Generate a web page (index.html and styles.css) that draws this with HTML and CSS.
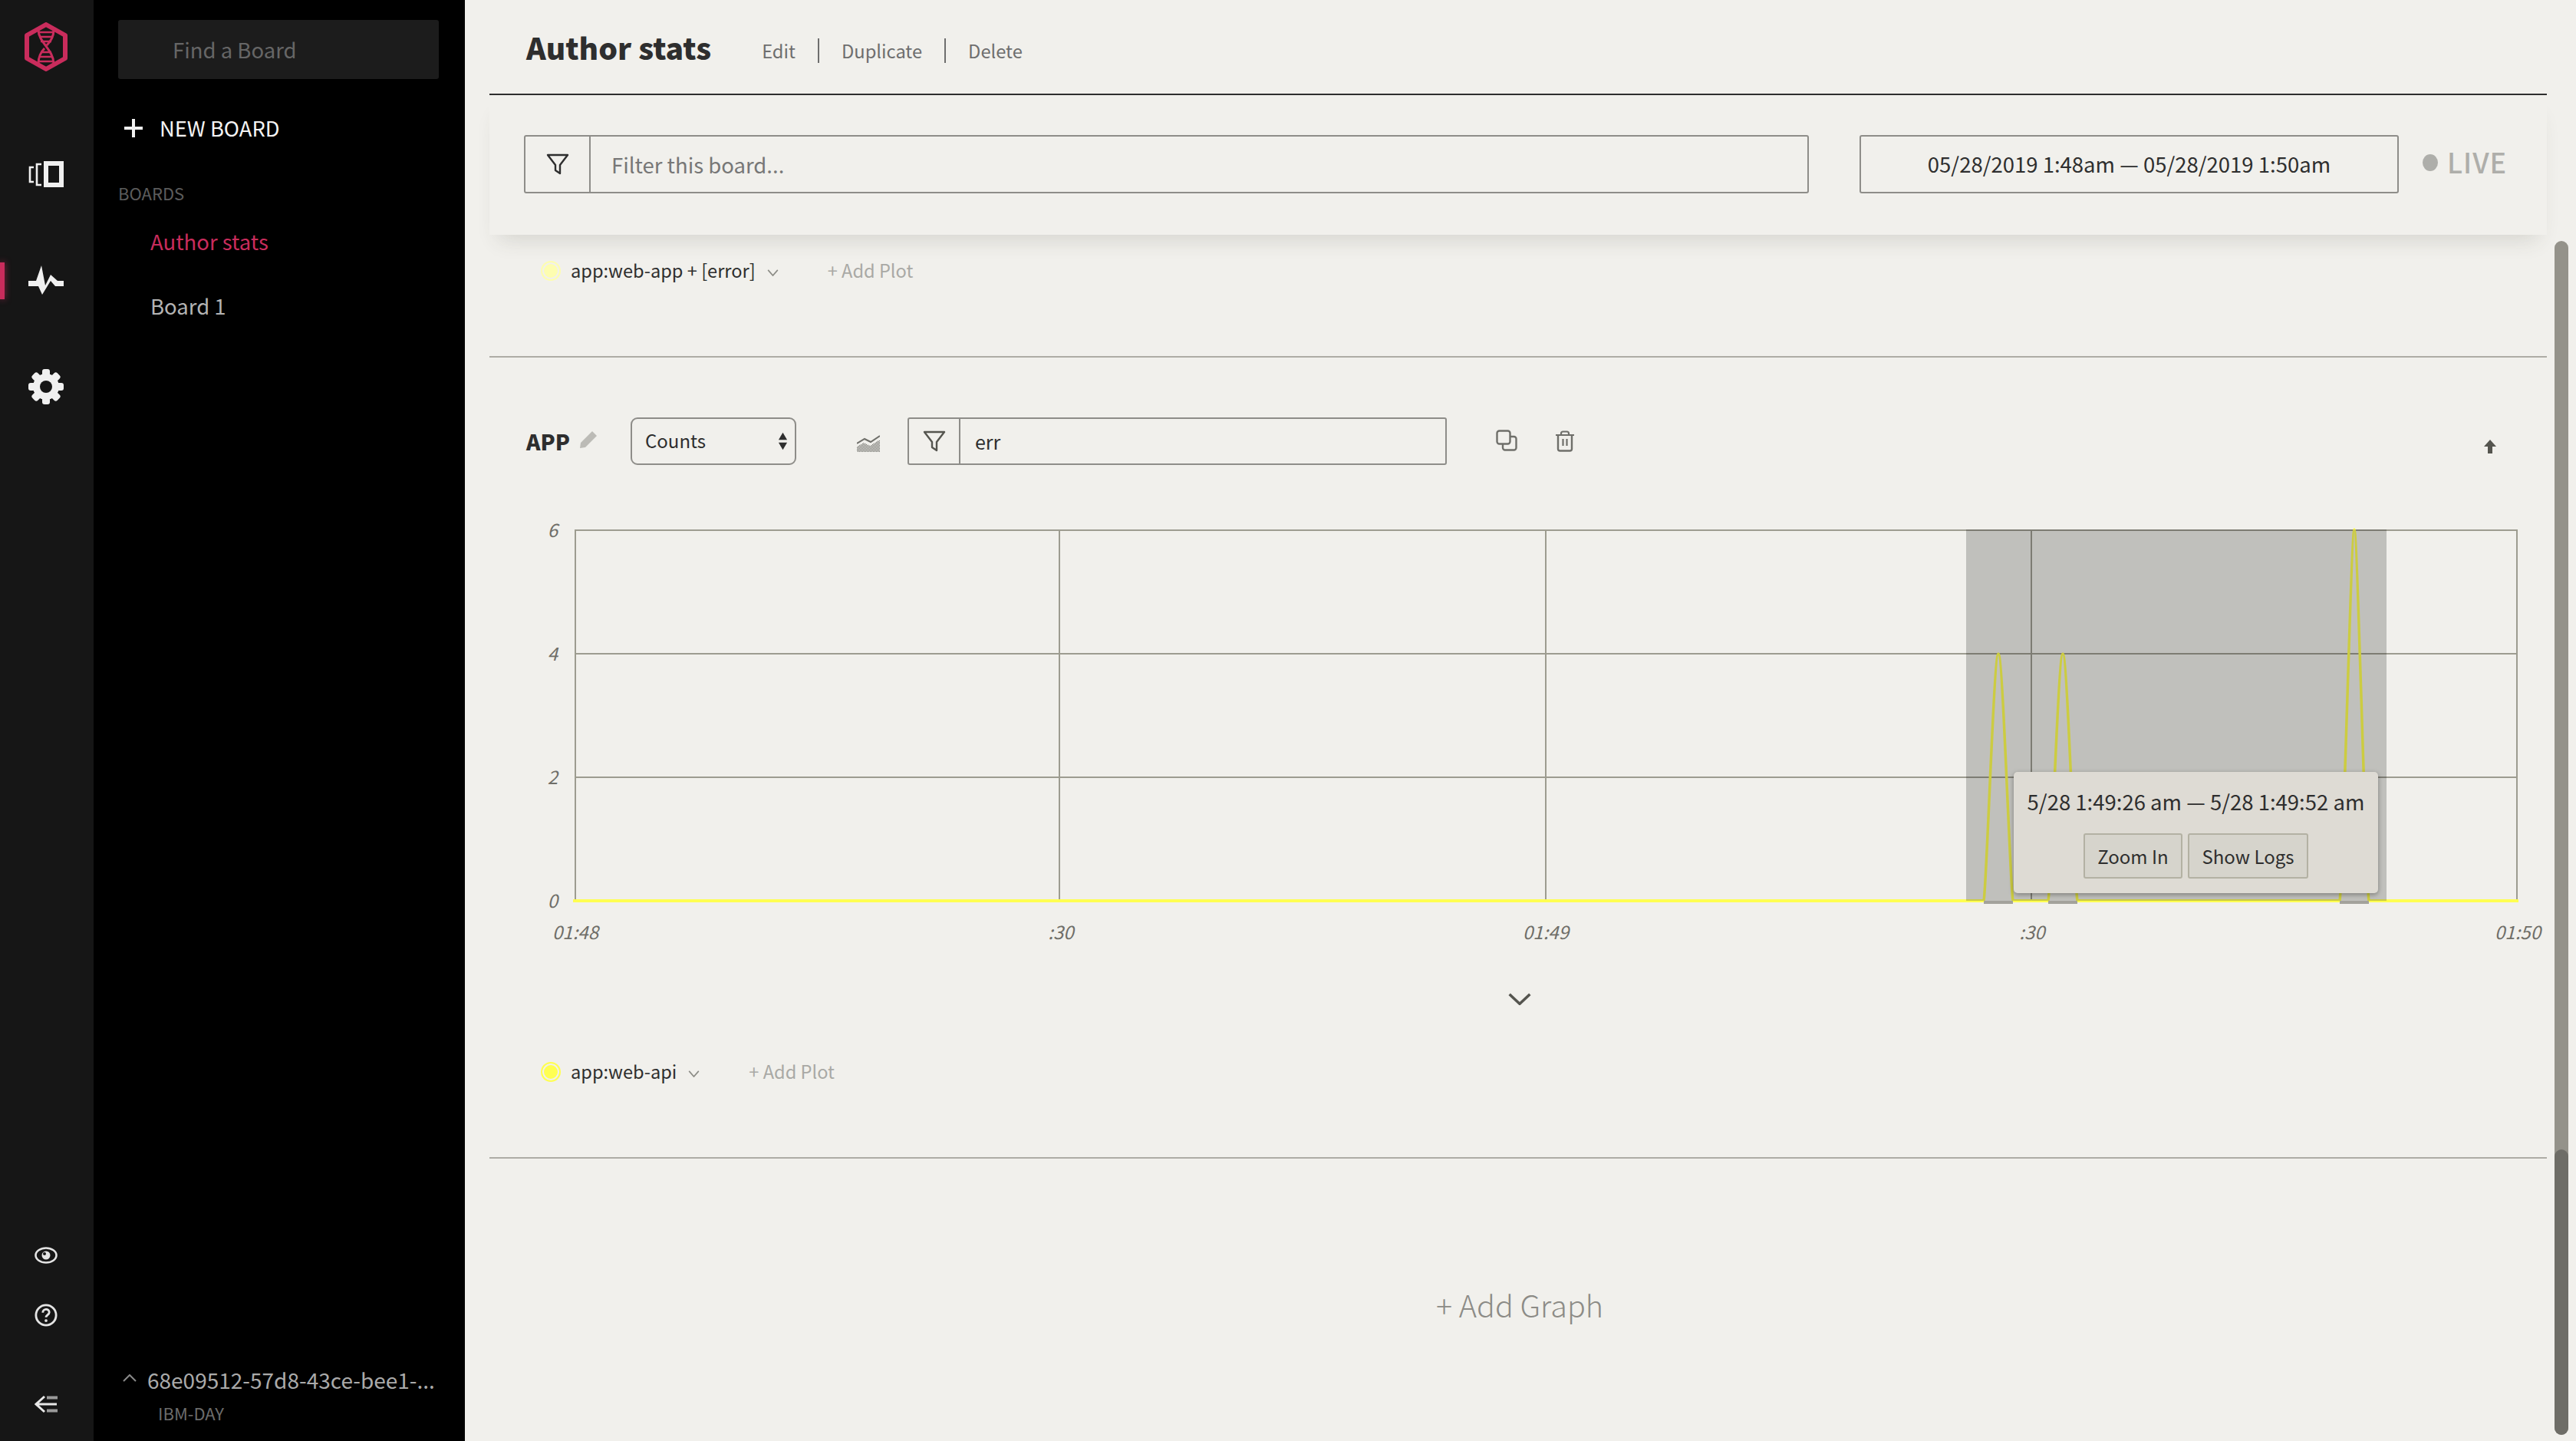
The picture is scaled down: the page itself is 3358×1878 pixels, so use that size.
FILE: index.html
```html
<!DOCTYPE html>
<html lang="en">
<head>
    <meta charset="UTF-8">
    <meta name="viewport" content="width=device-width, initial-scale=1.0">
    <title>Author stats</title>
    <link rel="stylesheet" href="styles.css">
</head>
<body>
<div class="app">
    <!-- Icon rail -->
    <nav class="rail">
        <svg class="rail-logo" viewBox="0 0 56 64">
            <path d="M28 3 L53 17 V47 L28 61 L3 47 V17 Z" fill="none" stroke="#c92c5c" stroke-width="6" stroke-linejoin="round"/>
            <path d="M18 10 C18 26 38 36 38 54 M38 10 C38 20 33 26 29 30 M26 34 C21 39 18 45 18 54" fill="none" stroke="#c92c5c" stroke-width="3"/>
            <path d="M18 13 H38 M19 19 H37 M21 25 H35 M21 39 H35 M19 45 H37 M18 51 H38" stroke="#c92c5c" stroke-width="2.5"/>
        </svg>
        <svg class="rail-icon icon-boards" viewBox="0 0 46 34">
            <rect x="23" y="3" width="20" height="28" fill="none" stroke="#f0f0f0" stroke-width="6"/>
            <path d="M7 8 H2 V27 H7 M17 4 H11 V31 H17" fill="none" stroke="#f0f0f0" stroke-width="2.6"/>
        </svg>
        <div class="rail-active">
            <span class="active-bar"></span>
            <svg class="rail-icon icon-pulse" viewBox="0 0 46 38">
                <polygon points="0,20 10,20 17,0 22,26 29,12 38,20 46,20 46,27 35,27 29,20 18,38 13,27 0,27" fill="#f0f0f0"/>
            </svg>
        </div>
        <svg class="rail-icon icon-gear" viewBox="0 0 46 46">
            <g fill="#f0f0f0">
                <rect x="18" y="0" width="10" height="46" rx="3"/>
                <rect x="18" y="0" width="10" height="46" rx="3" transform="rotate(45 23 23)"/>
                <rect x="18" y="0" width="10" height="46" rx="3" transform="rotate(90 23 23)"/>
                <rect x="18" y="0" width="10" height="46" rx="3" transform="rotate(135 23 23)"/>
                <circle cx="23" cy="23" r="17"/>
            </g>
            <circle cx="23" cy="23" r="8" fill="#161616"/>
        </svg>
        <div class="rail-bottom">
            <svg class="rail-small icon-eye" viewBox="0 0 30 22">
                <ellipse cx="15" cy="11" rx="13.5" ry="9.5" fill="none" stroke="#e4e4e4" stroke-width="2.6"/>
                <circle cx="15" cy="11" r="5.5" fill="#e4e4e4"/>
                <circle cx="13" cy="9" r="2" fill="#161616"/>
            </svg>
            <svg class="rail-small icon-help" viewBox="0 0 32 32">
                <circle cx="16" cy="16" r="14" fill="none" stroke="#e4e4e4" stroke-width="3"/>
                <path d="M11.5 12.5 C11.5 6.5 20.5 6.5 20.5 12 C20.5 15.5 16 15.5 16 19" fill="none" stroke="#e4e4e4" stroke-width="3"/>
                <circle cx="16" cy="23.5" r="2" fill="#e4e4e4"/>
            </svg>
            <svg class="rail-small icon-collapse" viewBox="0 0 30 24">
                <path d="M13 2 L2 12 L13 22 M2 12 H29" fill="none" stroke="#e8e8e8" stroke-width="3"/>
                <path d="M16 3.5 H30 M16 20.5 H30" stroke="#9a9a9a" stroke-width="4"/>
            </svg>
        </div>
    </nav>

    <!-- Boards list -->
    <aside class="sidebar">
        <div class="board-search">Find a Board</div>
        <div class="new-board">
            <svg class="new-board-icon" viewBox="0 0 24 24"><path d="M12 0 V24 M0 12 H24" stroke="#f0f0f0" stroke-width="4"/></svg>
            <span>NEW BOARD</span>
        </div>
        <div class="boards-label">BOARDS</div>
        <a class="board-link board-link-active">Author stats</a>
        <a class="board-link">Board 1</a>
        <div class="account">
            <div class="account-row">
                <svg class="account-caret" viewBox="0 0 18 10"><path d="M1 9 L9 1 L17 9" fill="none" stroke="#8a8a8a" stroke-width="2"/></svg>
                <span class="account-id">68e09512-57d8-43ce-bee1-...</span>
            </div>
            <div class="account-name">IBM-DAY</div>
        </div>
    </aside>

    <main class="main">
        <header class="board-head">
            <h1 class="board-title">Author stats</h1>
            <a class="head-action">Edit</a>
            <a class="head-action">Duplicate</a>
            <a class="head-action">Delete</a>
        </header>

        <section class="filter-bar">
            <div class="filter-box filter-box-main">
                <span class="filter-cell">
                    <svg class="funnel" viewBox="0 0 30 28"><path d="M2 2 H28 L18 15 V26 L12 22 V15 Z" fill="none" stroke="#2e2e2e" stroke-width="2.4" stroke-linejoin="round"/></svg>
                </span>
                <span class="filter-text">Filter this board...</span>
            </div>
            <div class="date-box">05/28/2019 1:48am — 05/28/2019 1:50am</div>
            <div class="live"><span class="live-dot"></span>LIVE</div>
        </section>

        <section class="graph graph-prev">
            <div class="legend">
                <span class="legend-dot legend-dot-pale"></span>
                <span class="legend-name">app:web-app + [error]</span>
                <svg class="legend-caret" viewBox="0 0 16 10"><path d="M1 1 L8 9 L15 1" fill="none" stroke="#8c8c86" stroke-width="1.8"/></svg>
                <span class="add-plot">+ Add Plot</span>
            </div>
        </section>

        <section class="graph">
            <div class="graph-tools">
                <span class="graph-name">APP</span>
                <svg class="pencil" viewBox="0 0 24 24"><path d="M1 23 L2 16 L17 1 L23 7 L8 22 Z" fill="#bcbbb6"/></svg>
                <div class="select-box">
                    <span>Counts</span>
                    <svg class="select-arrows" viewBox="0 0 14 24"><path d="M7 0 L13 10 H1 Z M1 14 H13 L7 24 Z" fill="#2e2e2e"/></svg>
                </div>
                <svg class="area-icon" viewBox="0 0 30 22">
                    <defs>
                        <pattern id="dots" width="2" height="2" patternUnits="userSpaceOnUse"><rect width="1" height="1" fill="#6f6f6a"/><rect x="1" y="1" width="1" height="1" fill="#6f6f6a"/></pattern>
                    </defs>
                    <path d="M0 15 L9 10 L17 14 L30 6 V22 H0 Z" fill="url(#dots)"/>
                    <path d="M0 11 L10 5 L18 9 L30 1" fill="none" stroke="#6f6f6a" stroke-width="2"/>
                </svg>
                <div class="filter-box filter-box-small">
                    <span class="filter-cell filter-cell-small">
                        <svg class="funnel" viewBox="0 0 30 28"><path d="M2 2 H28 L18 15 V26 L12 22 V15 Z" fill="none" stroke="#55554f" stroke-width="2.4" stroke-linejoin="round"/></svg>
                    </span>
                    <span class="filter-value">err</span>
                </div>
                <svg class="tool-icon tool-copy" viewBox="0 0 28 28">
                    <rect x="1.5" y="1.5" width="17" height="17" rx="3" fill="none" stroke="#6f6f6a" stroke-width="2.4"/>
                    <path d="M19 9 H23.5 A3 3 0 0 1 26.5 12 V23.5 A3 3 0 0 1 23.5 26.5 H12 A3 3 0 0 1 9 23.5 V19" fill="none" stroke="#6f6f6a" stroke-width="2.4"/>
                </svg>
                <svg class="tool-icon tool-trash" viewBox="0 0 26 28">
                    <path d="M1 6 H25 M8 6 V4 A2.5 2.5 0 0 1 10.5 1.5 H15.5 A2.5 2.5 0 0 1 18 4 V6" fill="none" stroke="#6f6f6a" stroke-width="2.2"/>
                    <path d="M4 6 V24 A2.5 2.5 0 0 0 6.5 26.5 H19.5 A2.5 2.5 0 0 0 22 24 V6" fill="none" stroke="#6f6f6a" stroke-width="2.4"/>
                    <path d="M10.5 11 V20 M15.5 11 V20" stroke="#6f6f6a" stroke-width="2.2"/>
                </svg>
                <svg class="move-up" viewBox="0 0 16 18"><path d="M8 0 L16 9 H11 V18 H5 V9 H0 Z" fill="#55554f"/></svg>
            </div>

            <div class="chart">
                <!-- viewBox uses page coordinates so the ticks read the same as the screenshot -->
                <svg class="chart-svg" viewBox="638 660 2682 590">
                    <g stroke="#9d9c90" fill="none">
                        <path d="M749 691 H3281 M749 852 H3281 M749 1013 H3281" stroke-width="2"/>
                        <path d="M750 690 V1172 M1381 690 V1172 M2015 690 V1172 M2648 690 V1172 M3281 690 V1172" stroke-width="2"/>
                    </g>
                    <path d="M2586 1174 C2590 1150 2599 852 2605 852 C2611 852 2620 1150 2624 1174 M2670 1174 C2674 1150 2683 852 2689 852 C2695 852 2704 1150 2708 1174 M3050 1174 C3054 1150 3065 690 3069 690 C3073 690 3084 1150 3088 1174" fill="none" stroke="#ffff52" stroke-width="3.5"/>
                    <path d="M747 1174 H2586 M2624 1174 H2670 M2708 1174 H3050 M3088 1174 H3283" fill="none" stroke="#ffff52" stroke-width="4"/>
                    <rect x="2563" y="690" width="548" height="484" fill="#000" fill-opacity="0.2"/>
                    <path d="M2586 1176 H2624 M2670 1176 H2708 M3050 1176 H3088" stroke="#a3a29b" stroke-width="4"/>
                    <g class="axis-text" text-anchor="end">
                        <text x="727" y="700">6</text>
                        <text x="727" y="861">4</text>
                        <text x="727" y="1022">2</text>
                        <text x="727" y="1183">0</text>
                    </g>
                    <g class="axis-text" text-anchor="middle">
                        <text x="750" y="1224">01:48</text>
                        <text x="1383" y="1224">:30</text>
                        <text x="2015" y="1224">01:49</text>
                        <text x="2649" y="1224">:30</text>
                        <text x="3282" y="1224">01:50</text>
                    </g>
                </svg>
                <div class="chart-tip">
                    <div class="chart-tip-range">5/28 1:49:26 am — 5/28 1:49:52 am</div>
                    <div class="chart-tip-actions">
                        <button class="tip-btn tip-btn-zoom">Zoom In</button>
                        <button class="tip-btn tip-btn-logs">Show Logs</button>
                    </div>
                </div>
            </div>

            <div class="expand">
                <svg class="expand-icon" viewBox="0 0 34 18"><path d="M2 2 L17 16 L32 2" fill="none" stroke="#55554f" stroke-width="4"/></svg>
            </div>

            <div class="legend">
                <span class="legend-dot"></span>
                <span class="legend-name">app:web-api</span>
                <svg class="legend-caret" viewBox="0 0 16 10"><path d="M1 1 L8 9 L15 1" fill="none" stroke="#8c8c86" stroke-width="1.8"/></svg>
                <span class="add-plot">+ Add Plot</span>
            </div>
        </section>

        <div class="add-graph">+ Add Graph</div>

        <div class="scroll-track"></div>
        <div class="scroll-thumb"></div>
    </main>
</div>
</body>
</html>
```

FILE: styles.css
```css
/* Basic Styles */
* {
    box-sizing: border-box;
}

body {
    font-family: "Noto Sans CJK SC", "Noto Sans", sans-serif;
    background-color: #f1f0ec;
    color: #2e2e2e;
    margin: 0;
    padding: 0;
}

svg {
    display: block;
    flex: none;
}

.app {
    display: flex;
    width: 3358px;
    height: 1878px;
    overflow: hidden;
}

/* Icon rail */
.rail {
    width: 122px;
    flex: none;
    height: 100%;
    background-color: #161616;
    display: flex;
    flex-direction: column;
    align-items: center;
    padding: 29px 2px 0 0;
}

.rail-logo {
    width: 56px;
    height: 64px;
}

.rail-icon {
    width: 46px;
}

.icon-boards {
    height: 34px;
    margin-top: 117px;
}

.rail-active {
    width: 100%;
    display: flex;
    justify-content: center;
    position: relative;
    margin-top: 102px;
}

.active-bar {
    position: absolute;
    left: 0;
    top: -4px;
    width: 6px;
    height: 48px;
    background-color: #c92c5c;
    box-shadow: 0 0 8px rgba(201, 44, 92, 0.7);
}

.icon-pulse {
    height: 38px;
}

.icon-gear {
    height: 46px;
    margin-top: 97px;
}

.rail-bottom {
    margin-top: auto;
    display: flex;
    flex-direction: column;
    align-items: center;
    padding-bottom: 36px;
}

.rail-small {
    width: 30px;
}

.icon-eye {
    height: 22px;
}

.icon-help {
    height: 32px;
    margin-top: 51px;
}

.icon-collapse {
    height: 24px;
    margin-top: 88px;
}

/* Boards list */
.sidebar {
    width: 484px;
    flex: none;
    height: 100%;
    background-color: #000;
    display: flex;
    flex-direction: column;
    padding: 26px 34px 0 32px;
}

.board-search {
    width: 418px;
    height: 77px;
    background-color: #1c1c1c;
    border-radius: 3px;
    color: #666;
    font-size: 27.5px;
    line-height: 77px;
    padding-left: 71px;
}

.new-board {
    display: flex;
    align-items: center;
    gap: 22px;
    margin-top: 41px;
    margin-left: 8px;
    height: 44px;
    color: #f4f4f4;
    font-size: 27.3px;
}

.new-board-icon {
    width: 24px;
    height: 24px;
    margin-top: 1px;
}

.boards-label {
    margin-top: 46px;
    height: 34px;
    line-height: 34px;
    color: #5c5c5c;
    font-size: 22px;
}

.board-link {
    display: block;
    margin-left: 42px;
    height: 44px;
    line-height: 44px;
    font-size: 27.5px;
    color: #b4b4b4;
    margin-top: 40px;
}

.board-link-active {
    color: #c92c5c;
    margin-top: 24px;
}

.account {
    margin-top: auto;
    padding-bottom: 22px;
}

.account-row {
    display: flex;
    align-items: center;
    gap: 14px;
    margin-left: 6px;
    height: 44px;
}

.account-caret {
    width: 18px;
    height: 10px;
    margin-top: -4px;
}

.account-id {
    color: #aaa;
    font-size: 28px;
    white-space: nowrap;
}

.account-name {
    margin-left: 52px;
    margin-top: 6px;
    height: 30px;
    line-height: 30px;
    color: #6c6c6c;
    font-size: 22px;
}

/* Main column */
.main {
    flex: 1;
    height: 100%;
    padding: 0 38px 0 32px;
    display: flex;
    flex-direction: column;
    position: relative;
}

.board-head {
    height: 124px;
    flex: none;
    border-bottom: 2px solid #2e2e2e;
    padding-left: 48px;
    display: flex;
    align-items: center;
}

.board-title {
    margin: 0 66px 0 0;
    font-size: 39px;
    font-weight: 900;
    color: #2e2e2e;
}

.head-action {
    font-size: 23.7px;
    color: #6e6e6e;
    line-height: 32px;
    margin-top: 9px;
    padding-right: 29px;
    margin-right: 29px;
    border-right: 2px solid #6e6e6e;
}

.head-action:last-child {
    border-right: none;
}

.filter-bar {
    height: 182px;
    flex: none;
    display: flex;
    align-items: flex-start;
    padding: 52px 55px 0 45px;
    position: relative;
    box-shadow: 0 18px 26px -12px rgba(60, 60, 50, 0.16);
    background-color: #f1f0ec;
}

.filter-box {
    display: flex;
    align-items: stretch;
    border: 2px solid #8e8d89;
    border-radius: 3px;
}

.filter-box-main {
    flex: 1;
    height: 76px;
}

.filter-cell {
    width: 85px;
    flex: none;
    border-right: 2px solid #8e8d89;
    display: flex;
    align-items: center;
    justify-content: center;
}

.funnel {
    width: 30px;
    height: 28px;
}

.filter-text {
    font-size: 27.5px;
    color: #777;
    line-height: 72px;
    padding-left: 27px;
}

.date-box {
    width: 703px;
    height: 76px;
    flex: none;
    margin-left: 66px;
    border: 2px solid #8e8d89;
    border-radius: 3px;
    text-align: center;
    font-size: 27.5px;
    line-height: 70px;
    color: #2e2e2e;
}

.live {
    width: 107px;
    flex: none;
    margin-left: 31px;
    display: flex;
    align-items: center;
    gap: 12px;
    height: 68px;
    font-size: 36px;
    font-weight: 500;
    letter-spacing: 1px;
    color: #aeaeaa;
}

.live-dot {
    width: 20px;
    height: 22px;
    flex: none;
    border-radius: 50%;
    background-color: #aeaeaa;
    margin-top: 4px;
}

/* Graphs */
.graph {
    flex: none;
    border-bottom: 2px solid #aeaca5;
    padding-top: 78px;
    padding-bottom: 64px;
}

.graph-prev {
    height: 160px;
    padding: 0;
}

.legend {
    height: 94px;
    display: flex;
    align-items: center;
    padding-left: 67px;
}

.legend-dot {
    width: 26px;
    height: 26px;
    flex: none;
    border-radius: 50%;
    background-color: #ffff52;
    border: 2px solid #ffff52;
    box-shadow: inset 0 0 0 2px #f1f0ec;
}

.legend-dot-pale {
    background-color: #fdfdb0;
    border-color: #fdfdb0;
}

.legend-name {
    font-size: 23.6px;
    color: #2e2e2e;
    margin-left: 13px;
    margin-top: -2px;
}

.legend-caret {
    width: 15px;
    height: 9px;
    margin-left: 15px;
    margin-top: 4px;
}

.add-plot {
    font-size: 23.6px;
    color: #a9a9a5;
    margin-left: 64px;
    margin-top: -2px;
}

.graph-tools {
    display: flex;
    align-items: center;
    height: 62px;
    padding-left: 48px;
}

.graph-name {
    font-size: 28px;
    font-weight: 900;
    color: #2e2e2e;
    width: 56px;
}

.pencil {
    width: 24px;
    height: 24px;
    margin-left: 13px;
    margin-top: -4px;
}

.select-box {
    width: 216px;
    height: 62px;
    margin-left: 43px;
    border: 2px solid #8e8d89;
    border-radius: 9px;
    display: flex;
    align-items: center;
    justify-content: space-between;
    padding: 0 9px 4px 17px;
    font-size: 24px;
}

.select-arrows {
    width: 13px;
    height: 24px;
    margin-top: 4px;
}

.area-icon {
    width: 30px;
    height: 22px;
    margin-left: 79px;
    margin-top: 6px;
}

.filter-box-small {
    width: 703px;
    height: 62px;
    margin-left: 36px;
}

.filter-cell-small {
    width: 67px;
}

.filter-value {
    font-size: 25px;
    line-height: 58px;
    padding-left: 19px;
}

.tool-icon {
    height: 28px;
}

.tool-copy {
    width: 28px;
    margin-left: 64px;
    margin-top: -2px;
}

.tool-trash {
    width: 26px;
    margin-left: 49px;
}

.move-up {
    width: 16px;
    height: 18px;
    margin-left: 1185px;
    margin-top: 14px;
}

.chart {
    position: relative;
    height: 590px;
    margin-top: 54px;
}

.chart-svg {
    width: 2682px;
    height: 590px;
}

.axis-text text {
    font-size: 24px;
    font-style: italic;
    fill: #6f6e68;
}

.chart-tip {
    position: absolute;
    left: 1987px;
    top: 346px;
    width: 475px;
    height: 158px;
    background-color: #dedbd4;
    border-radius: 5px;
    box-shadow: 0 2px 6px rgba(0, 0, 0, 0.35);
    text-align: center;
    padding-top: 18px;
}

.chart-tip-range {
    font-size: 27.5px;
    line-height: 40px;
    color: #2e2e2e;
}

.chart-tip-actions {
    display: flex;
    justify-content: center;
    gap: 7px;
    margin-top: 22px;
}

.tip-btn {
    height: 59px;
    padding: 0;
    font-family: inherit;
    font-size: 24px;
    color: #2e2e2e;
    background-color: #d6d4cc;
    border: 2px solid #b3b1a3;
    border-radius: 3px;
}

.tip-btn-zoom {
    width: 129px;
}

.tip-btn-logs {
    width: 157px;
}

.expand {
    display: flex;
    justify-content: center;
    margin-top: 44px;
    margin-bottom: 40px;
    padding-left: 4px;
}

.expand-icon {
    width: 34px;
    height: 16px;
}

.add-graph {
    flex: 1;
    display: flex;
    align-items: center;
    justify-content: center;
    padding: 10px 0 0 4px;
    font-size: 39.5px;
    font-weight: 300;
    color: #8c8b86;
}

/* Scrollbars overlay the column */
.scroll-track,
.scroll-thumb {
    position: absolute;
    right: 10px;
    width: 18px;
    border-radius: 9px;
}

.scroll-track {
    top: 314px;
    bottom: 8px;
    background-color: #94928a;
}

.scroll-thumb {
    top: 1498px;
    bottom: 8px;
    background-color: #6e6d67;
}
```
